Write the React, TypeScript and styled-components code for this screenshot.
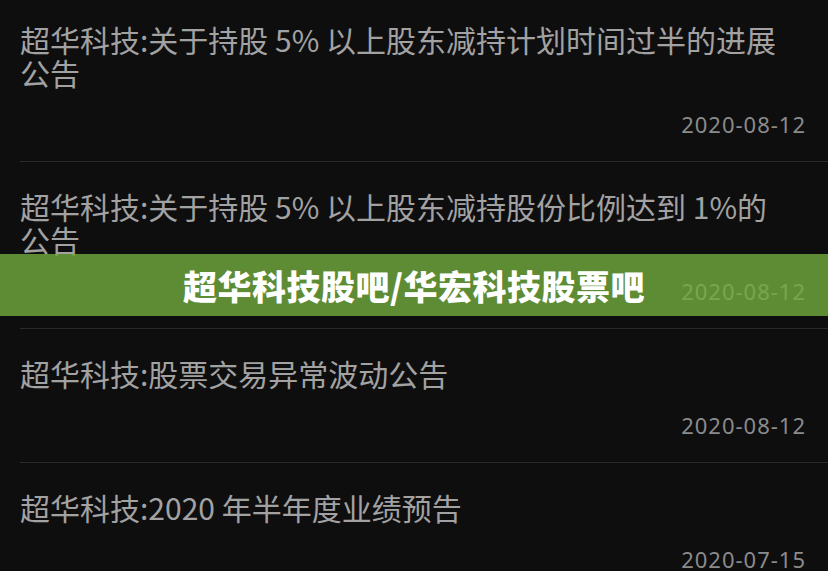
import styled, { createGlobalStyle } from "styled-components";

const GlobalStyle = createGlobalStyle`
  html, body {
    margin: 0;
    padding: 0;
    background: #0e0e0f;
  }
  * {
    box-sizing: border-box;
  }
`;

const Screen = styled.div`
  position: relative;
  width: 828px;
  height: 571px;
  overflow: hidden;
  background: #0e0e0f;
  font-family: "Noto Sans CJK SC", "Noto Sans", sans-serif;
`;

const NoticeList = styled.ul`
  list-style: none;
  margin: -5px 0 0 0;
  padding: 0;
`;

const NoticeRow = styled.li`
  margin-left: 20px;
  padding: 28px 22px 25px 0;
  border-bottom: 1px solid #2a2a2b;
  display: flex;
  flex-direction: column;
`;

const NoticeTitle = styled.p`
  margin: 0;
  padding-right: 16px;
  font-size: 30px;
  line-height: 33px;
  font-weight: 400;
  color: #a2a2a3;
`;

const NoticeDate = styled.span`
  margin-top: 23px;
  align-self: flex-end;
  font-family: "Noto Sans", sans-serif;
  font-size: 22px;
  line-height: 24px;
  letter-spacing: 1px;
  color: #8b8b8c;
`;

// translucent strip laid across the list
const Banner = styled.div`
  position: absolute;
  left: 0;
  right: 0;
  top: 254px;
  height: 62px;
  display: flex;
  align-items: center;
  justify-content: center;
  background: rgba(115, 173, 63, 0.8);
`;

const BannerText = styled.h1`
  margin: 0;
  font-size: 34px;
  font-weight: 900;
  color: #ffffff;
  letter-spacing: 0.5px;
`;

const notices = [
  { title: "超华科技:关于持股 5% 以上股东减持计划时间过半的进展公告", date: "2020-08-12" },
  { title: "超华科技:关于持股 5% 以上股东减持股份比例达到 1%的公告", date: "2020-08-12" },
  { title: "超华科技:股票交易异常波动公告", date: "2020-08-12" },
  { title: "超华科技:2020 年半年度业绩预告", date: "2020-07-15" },
];

export default function App() {
  return (
    <>
      <GlobalStyle />
      <Screen>
        <NoticeList>
          {notices.map((n, i) => (
            <NoticeRow key={i}>
              <NoticeTitle>{n.title}</NoticeTitle>
              <NoticeDate>{n.date}</NoticeDate>
            </NoticeRow>
          ))}
        </NoticeList>
        <Banner>
          <BannerText>超华科技股吧/华宏科技股票吧</BannerText>
        </Banner>
      </Screen>
    </>
  );
}
